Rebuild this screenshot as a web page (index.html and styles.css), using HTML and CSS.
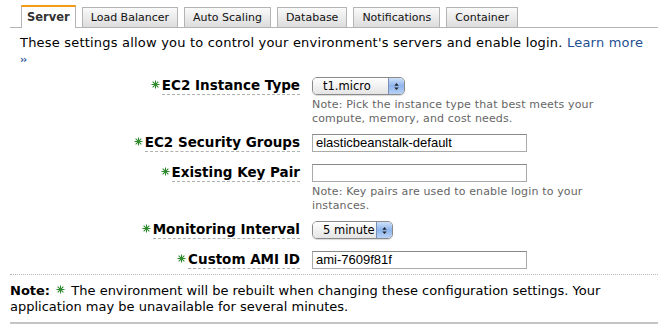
FILE: index.html
```html
<!DOCTYPE html>
<html lang="en">
<head>
  <meta charset="UTF-8" />
  <title>Server settings</title>
  <link rel="stylesheet" href="styles.css">
</head>
<body>

  <div class="tabs">
    <div class="tab active">Server</div>
    <div class="tab">Load Balancer</div>
    <div class="tab">Auto Scaling</div>
    <div class="tab">Database</div>
    <div class="tab">Notifications</div>
    <div class="tab">Container</div>
  </div>

  <p class="intro">These settings allow you to control your environment's servers and enable login. <a href="#">Learn more</a><br><a href="#" class="more">&rsaquo;&rsaquo;</a></p>

  <div class="form">
    <div class="row">
      <div class="label"><span class="req"><svg viewBox="0 0 10 10"><path d="M5 0.5V9.5M0.5 5H9.5M1.8 1.8L8.2 8.2M8.2 1.8L1.8 8.2"/></svg></span><span class="name">EC2 Instance Type</span></div>
      <div class="field">
        <div class="select wide"><span class="value">t1.micro</span><span class="arrows"><svg viewBox="0 0 8 10"><path d="M4 1L6.5 4H1.5Z M4 9L6.5 6H1.5Z"/></svg></span></div>
        <p class="hint">Note: Pick the instance type that best meets your<br>compute, memory, and cost needs.</p>
      </div>
    </div>

    <div class="row">
      <div class="label"><span class="req"><svg viewBox="0 0 10 10"><path d="M5 0.5V9.5M0.5 5H9.5M1.8 1.8L8.2 8.2M8.2 1.8L1.8 8.2"/></svg></span><span class="name">EC2 Security Groups</span></div>
      <div class="field">
        <div class="input">elasticbeanstalk-default</div>
      </div>
    </div>

    <div class="row">
      <div class="label"><span class="req"><svg viewBox="0 0 10 10"><path d="M5 0.5V9.5M0.5 5H9.5M1.8 1.8L8.2 8.2M8.2 1.8L1.8 8.2"/></svg></span><span class="name">Existing Key Pair</span></div>
      <div class="field">
        <div class="input"></div>
        <p class="hint">Note: Key pairs are used to enable login to your<br>instances.</p>
      </div>
    </div>

    <div class="row">
      <div class="label"><span class="req"><svg viewBox="0 0 10 10"><path d="M5 0.5V9.5M0.5 5H9.5M1.8 1.8L8.2 8.2M8.2 1.8L1.8 8.2"/></svg></span><span class="name">Monitoring Interval</span></div>
      <div class="field">
        <div class="select"><span class="value">5 minute</span><span class="arrows"><svg viewBox="0 0 8 10"><path d="M4 1L6.5 4H1.5Z M4 9L6.5 6H1.5Z"/></svg></span></div>
      </div>
    </div>

    <div class="row">
      <div class="label"><span class="req"><svg viewBox="0 0 10 10"><path d="M5 0.5V9.5M0.5 5H9.5M1.8 1.8L8.2 8.2M8.2 1.8L1.8 8.2"/></svg></span><span class="name">Custom AMI ID</span></div>
      <div class="field">
        <div class="input">ami-7609f81f</div>
      </div>
    </div>
  </div>

  <p class="note"><b>Note:</b> <span class="req"><svg viewBox="0 0 10 10"><path d="M5 0.5V9.5M0.5 5H9.5M1.8 1.8L8.2 8.2M8.2 1.8L1.8 8.2"/></svg></span> The environment will be rebuilt when changing these configuration settings. Your application may be unavailable for several minutes.</p>

</body>
</html>
```

FILE: styles.css
```css
body {
  margin: 0;
  font-family: 'DejaVu Sans', Verdana, sans-serif;
  font-size: 13px;
  color: #000;
  background: #fff;
}

.tabs {
  display: flex;
  align-items: flex-end;
  gap: 6px;
  margin: 5px 10px 0 10px;
  padding-left: 11px;
  border-bottom: 1px solid #b4b4b4;
  height: 22px;
}

.tab {
  height: 19px;
  line-height: 19px;
  padding: 0 8px;
  font-size: 11px;
  color: #111;
  border: 1px solid #b4b4b4;
  border-bottom: none;
  background: linear-gradient(#fafafa, #dcdcdc);
}

.tab.active {
  height: 21px;
  line-height: 21px;
  margin-bottom: -1px;
  padding: 0 5px;
  font-size: 11.5px;
  font-weight: bold;
  color: #333;
  background: #fff;
  border-top: 2px solid #f39c12;
}

.intro {
  margin: 7px 0 0 20px;
  line-height: 16px;
  letter-spacing: 0.2px;
}

a {
  color: #1d4f91;
  text-decoration: none;
}

.more {
  font-size: 10px;
  font-weight: bold;
  letter-spacing: -1px;
}

.form {
  margin: 9px 10px 0 10px;
  padding-bottom: 5px;
  border-bottom: 1px dotted #b8b8b8;
}

.row {
  display: flex;
  gap: 12px;
  margin-bottom: 12px;
}

.row:last-child {
  margin-bottom: 0;
}

.label {
  width: 290px;
  display: flex;
  justify-content: flex-end;
  align-items: flex-start;
  padding-top: 1px;
}

.name {
  font-weight: bold;
  font-size: 13.5px;
  line-height: 14px;
  padding-bottom: 2px;
  border-bottom: 1px dashed #b0b0b0;
}

.req {
  display: inline-block;
  width: 9px;
  height: 9px;
  margin-right: 2px;
  vertical-align: 1px;
}

.label .req {
  margin-top: 2px;
}

.req svg {
  display: block;
  width: 9px;
  height: 9px;
  fill: none;
  stroke: #2f8a2f;
  stroke-width: 1.2;
}

.field {
  display: flex;
  flex-direction: column;
}

.hint {
  margin: 3px 0 -4px 0;
  font-size: 11px;
  line-height: 14px;
  letter-spacing: 0.15px;
  color: #666;
}

.input {
  width: 207px;
  height: 16px;
  line-height: 16px;
  padding: 0 3px;
  font-family: 'Liberation Sans', Arial, sans-serif;
  font-size: 13px;
  border: 1px solid #aaa;
  border-top-color: #888;
}

.select {
  display: flex;
  width: 79px;
  height: 16px;
  border: 1px solid #8a8a8a;
  border-radius: 5px;
  overflow: hidden;
  font-size: 11.5px;
  box-shadow: 0 1px 1px rgba(0, 0, 0, 0.15);
}

.select.wide {
  width: 91px;
}

.value {
  flex: 1;
  padding-left: 10px;
  line-height: 16px;
  background: linear-gradient(#fff, #f2f2f2 50%, #e4e4e4);
}

.arrows {
  width: 15px;
  border-left: 1px solid #7a8fb8;
  background: linear-gradient(#cfe0f8, #8db4ec 50%, #b9d2f5);
  display: flex;
  align-items: center;
  justify-content: center;
}

.arrows svg {
  width: 7px;
  height: 9px;
  fill: #222;
}

.note {
  margin: 8px 10px 0 10px;
  padding: 0 0 7px 0;
  line-height: 16px;
  border-bottom: 2px solid #c4c4c4;
}

.note .req {
  margin: 0 2px;
}
```
